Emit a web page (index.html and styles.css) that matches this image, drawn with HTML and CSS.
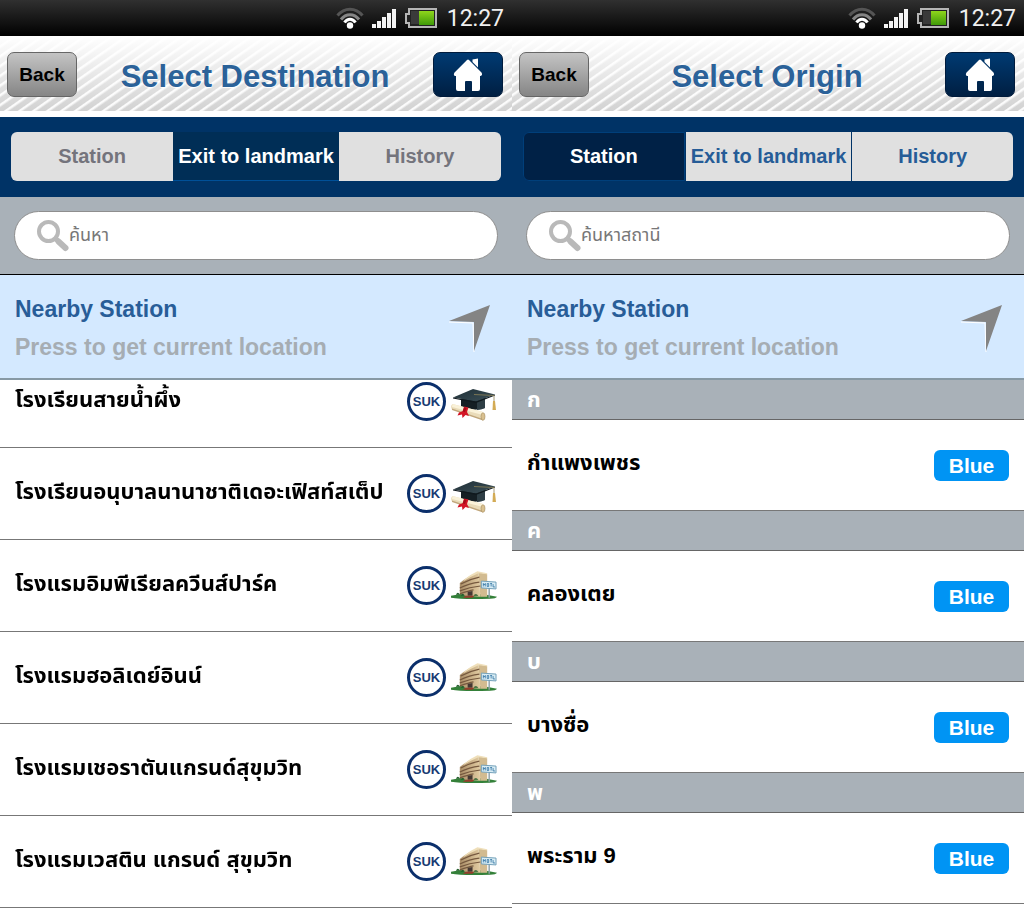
FILE: index.html
```html
<!DOCTYPE html>
<html lang="th">

<head>
    <meta charset="UTF-8">
    <meta name="viewport" content="width=device-width, initial-scale=1.0">
    <title>Select Station</title>
    <link rel="stylesheet" href="styles.css">
</head>

<body>
    <!-- shared icons -->
    <svg class="sprite" aria-hidden="true">
        <defs>
            <linearGradient id="green" x1="0" y1="0" x2="0" y2="1">
                <stop offset="0" stop-color="#8fd61c" />
                <stop offset="1" stop-color="#3f9a08" />
            </linearGradient>
            <linearGradient id="wall" x1="0" y1="0" x2="1" y2="0">
                <stop offset="0" stop-color="#a98c66" />
                <stop offset="1" stop-color="#e3cda3" />
            </linearGradient>
            <linearGradient id="board" x1="0" y1="0" x2="1" y2="1">
                <stop offset="0" stop-color="#1f2f36" />
                <stop offset="1" stop-color="#3c5058" />
            </linearGradient>
        </defs>
        <symbol id="wifi" viewBox="0 0 28 24">
            <g fill="none" stroke-width="3">
                <path d="M1.500 9.500C8.500 1 19.500 1 26.500 9.500" stroke="#555" />
                <path d="M5 13.500C10 7 18 7 23 13.500" stroke="#858585" />
                <path d="M8.500 16.500C11.500 12 16.500 12 19.500 16.500" stroke="#fff" />
            </g>
            <circle cx="14" cy="19.500" r="3.200" fill="#fff" />
        </symbol>
        <symbol id="signal" viewBox="0 0 25 20">
            <path d="M0 16h4v4H0zM5 13h4v7H5zM10 9h4v11h-4zM15 5h4v15h-4zM20 1h4v19h-4z" fill="#f4f4f4" />
        </symbol>
        <symbol id="battery" viewBox="0 0 32 20">
            <path d="M4 1h27v18H4v-4H1V6h3z" fill="#222" stroke="#b5b5b5" stroke-width="2" />
            <path d="M6 3h8v13H6z" fill="#3a3a3a" />
            <path d="M14 3h15v14H14z" fill="url(#green)" />
        </symbol>
        <symbol id="home" viewBox="0 0 30 34">
            <path d="M14 2Q15 1 16 2L28.500 14.500Q30 17 27.500 18H27V31Q27 33 25 33H19V24Q19 23 18 23H13Q12 23 12 24V33H5Q3 33 3 31V18H2Q0 17 1.500 14.500Z" fill="#fff" />
            <path d="M19.500 1.500L25 .5V9.500L19.500 4Z" fill="#fff" />
        </symbol>
        <symbol id="search" viewBox="0 0 32 32">
            <circle cx="11.500" cy="11.500" r="9.500" fill="none" stroke="#b9b9b9" stroke-width="4" />
            <path d="M18.500 18.500L20.500 20.500" stroke="#b9b9b9" stroke-width="5" />
            <path d="M21.500 21.500L28.500 28" stroke="#b9b9b9" stroke-width="6" stroke-linecap="round" />
        </symbol>
        <symbol id="arrow" viewBox="0 0 44 50">
            <path d="M1 19L25 20L26 49" fill="none" stroke="#fff" stroke-width="1" />
            <path d="M42 2L1 18L26 19L26 48Z" fill="#848484" />
        </symbol>
        <symbol id="cap" viewBox="0 -6 46 38">
            <path d="M10 10V18Q21 23 34 19V9Z" fill="#151f24" />
            <path d="M26 12L34 9V19Q30 21 26 21Z" fill="#2e3e45" />
            <path d="M2 8.500L22 0L44 5.500L25 12.500Z" fill="url(#board)" />
            <path d="M2 8.500L25 12.500L44 5.500V6.500L25 14L2 9.500Z" fill="#10191e" />
            <path d="M23 5.500L43 6.500V14" fill="none" stroke="#8d8155" stroke-width=".8" />
            <path d="M42 12H44L45 21H41.500Z" fill="#d3ab55" />
            <path d="M1.500 15L32 23V31L1 20.500Q-1 17 1.500 15Z" fill="#e9dbb9" />
            <path d="M1.500 15L32 23V26L1 18Z" fill="#faf2d9" />
            <path d="M1 19.500L32 30V31.500L1 21Z" fill="#c0a67c" />
            <ellipse cx="32" cy="27.500" rx="2" ry="3.800" fill="#d9c08f" stroke="#a58d60" stroke-width=".6" />
            <path d="M13 17.500L17.500 18.500L16 23L18 27L14.500 26L11.500 29L11 25.500L6.500 26.500L8 23.500L12 22Z" fill="#d31525" />
            <path d="M13 18.500L15.500 19L14 23L11.500 22.500Z" fill="#a80c19" />
        </symbol>
        <symbol id="hotel" viewBox="0 0 47 29">
            <path d="M0 25Q22 20 47 26Q46 28 40 28Q12 29 0 27Z" fill="#348039" />
            <path d="M9 12Q17 5 28 1L30 26L14 25L9 23Z" fill="url(#wall)" />
            <path d="M28 1L37 3V26L30 26Z" fill="#d2bb90" />
            <path d="M13 9Q20 3 27 0L37 2V3L28 2Q19 6 13 10Z" fill="#efdfba" />
            <g fill="none" stroke="#76593f" stroke-width="1.200">
                <path d="M10 13Q19 8 29 6" />
                <path d="M9 17Q19 12 29 11" />
                <path d="M9 20Q19 16 30 15" />
                <path d="M9 23Q18 20 23 19" />
            </g>
            <path d="M17 21L22 20V25H17Z" fill="#453833" />
            <path d="M5 24Q7 20 9 24ZM10 25Q12 21 14 25ZM23 25Q25 22 28 25Z" fill="#235e2c" />
            <path d="M15 25L24 25L22 27H12Z" fill="#963c2b" />
            <path d="M39 16V27" stroke="#8fa1a8" stroke-width="1.500" />
            <path d="M31 10L46 11V18L31 17Z" fill="#d9edf5" stroke="#719fb8" />
            <path d="M33 12V15.500M33 13.500H35M35 12V15.500M37 12.500H38.500V15.500H37ZM40 12.500H42M41 12.500V15.500M43 13V16H45" fill="none" stroke="#2c70a0" stroke-width=".8" />
        </symbol>
    </svg>

    <div class="screens">
        <section class="panel">
            <div class="status">
                <svg class="wifi"><use href="#wifi" /></svg>
                <svg class="signal"><use href="#signal" /></svg>
                <svg class="battery"><use href="#battery" /></svg>
                <span>12:27</span>
            </div>
            <header class="header">
                <button type="button" class="back">Back</button>
                <h1>Select Destination</h1>
                <a href="#" class="home" aria-label="Home"><svg><use href="#home" /></svg></a>
            </header>
            <nav class="tabs tabsGrey">
                <div class="tabGroup">
                    <button type="button">Station</button>
                    <button type="button" class="current">Exit to landmark</button>
                    <button type="button">History</button>
                </div>
            </nav>
            <div class="search">
                <label class="searchBox">
                    <svg><use href="#search" /></svg>
                    <input type="text" placeholder="ค้นหา" aria-label="ค้นหา">
                </label>
            </div>
            <button type="button" class="nearby">
                <span class="nearbyText">
                    <strong>Nearby Station</strong>
                    <span>Press to get current location</span>
                </span>
                <svg><use href="#arrow" /></svg>
            </button>
            <div class="list">
                <ul class="landmarks">
                    <li><span class="name">โรงเรียนสายน้ำผึ้ง</span><span class="code">SUK</span><svg class="cap"><use href="#cap" /></svg></li>
                    <li><span class="name">โรงเรียนอนุบาลนานาชาติเดอะเฟิสท์สเต็ป</span><span class="code">SUK</span><svg class="cap"><use href="#cap" /></svg></li>
                    <li><span class="name">โรงแรมอิมพีเรียลควีนส์ปาร์ค</span><span class="code">SUK</span><svg class="hotel"><use href="#hotel" /></svg></li>
                    <li><span class="name">โรงแรมฮอลิเดย์อินน์</span><span class="code">SUK</span><svg class="hotel"><use href="#hotel" /></svg></li>
                    <li><span class="name">โรงแรมเชอราตันแกรนด์สุขุมวิท</span><span class="code">SUK</span><svg class="hotel"><use href="#hotel" /></svg></li>
                    <li><span class="name">โรงแรมเวสติน แกรนด์ สุขุมวิท</span><span class="code">SUK</span><svg class="hotel"><use href="#hotel" /></svg></li>
                </ul>
            </div>
        </section>

        <section class="panel">
            <div class="status">
                <svg class="wifi"><use href="#wifi" /></svg>
                <svg class="signal"><use href="#signal" /></svg>
                <svg class="battery"><use href="#battery" /></svg>
                <span>12:27</span>
            </div>
            <header class="header">
                <button type="button" class="back">Back</button>
                <h1>Select Origin</h1>
                <a href="#" class="home" aria-label="Home"><svg><use href="#home" /></svg></a>
            </header>
            <nav class="tabs tabsBlue">
                <div class="tabGroup">
                    <button type="button" class="current">Station</button>
                    <button type="button">Exit to landmark</button>
                    <button type="button">History</button>
                </div>
            </nav>
            <div class="search">
                <label class="searchBox">
                    <svg><use href="#search" /></svg>
                    <input type="text" placeholder="ค้นหาสถานี" aria-label="ค้นหาสถานี">
                </label>
            </div>
            <button type="button" class="nearby">
                <span class="nearbyText">
                    <strong>Nearby Station</strong>
                    <span>Press to get current location</span>
                </span>
                <svg><use href="#arrow" /></svg>
            </button>
            <div class="list stations">
                <h2>ก</h2>
                <ul>
                    <li><span class="name">กำแพงเพชร</span><span class="line">Blue</span></li>
                </ul>
                <h2>ค</h2>
                <ul>
                    <li><span class="name">คลองเตย</span><span class="line">Blue</span></li>
                </ul>
                <h2>บ</h2>
                <ul>
                    <li><span class="name">บางซื่อ</span><span class="line">Blue</span></li>
                </ul>
                <h2>พ</h2>
                <ul>
                    <li><span class="name">พระราม 9</span><span class="line">Blue</span></li>
                </ul>
            </div>
        </section>
    </div>
</body>

</html>
```
FILE: styles.css
```css
* {
    box-sizing: border-box;
    margin: 0;
    padding: 0;
}

body {
    background-color: #fff;
    color: #000;
    font-family: "Liberation Sans", "Noto Sans Thai", "Noto Sans", sans-serif;
}

ul {
    list-style: none;
}

button {
    border: 0;
    font-family: inherit;
    font-weight: bold;
    cursor: pointer;
}

svg {
    display: block;
    flex: none;
}

.sprite {
    position: absolute;
    width: 0;
    height: 0;
}

.screens {
    display: grid;
    grid-template-columns: 1fr 1fr;
}

.panel {
    min-width: 0;
}

/* status bar */
.status {
    display: flex;
    align-items: center;
    justify-content: flex-end;
    gap: 8px;
    height: 36px;
    padding: 0 8px;
    background: linear-gradient(#303030, #000);
    color: #f0f0f0;
    font-family: Roboto, sans-serif;
    font-size: 23px;
}

.status span {
    margin-left: 2px;
}

.wifi {
    width: 28px;
    height: 24px;
}

.signal {
    width: 25px;
    height: 20px;
}

.battery {
    width: 32px;
    height: 20px;
}

/* title bar */
.header {
    display: flex;
    align-items: center;
    justify-content: space-between;
    height: 81px;
    padding: 2px 9px 0 7px;
    border-bottom: 6px solid #fff;
    background:
        linear-gradient(#fff, rgba(255, 255, 255, 0)),
        repeating-linear-gradient(145deg, #fbfbfb 0, #fbfbfb 1px, #d2d2d2 3px, #d2d2d2 7px, #fbfbfb 8px);
}

.header h1 {
    padding-top: 4px;
    color: #2b6299;
    font-size: 31px;
    line-height: 40px;
    text-shadow: 0 1px 1px #fff;
}

.back,
.home {
    width: 70px;
    height: 45px;
    border-radius: 7px;
}

.back {
    border: 1px solid #666;
    background: linear-gradient(#c4c4c4, #858585);
    font-size: 19px;
}

.home {
    display: flex;
    align-items: center;
    justify-content: center;
    border: 1px solid #001b3c;
    background: linear-gradient(#003a72, #001f42);
}

.home svg {
    width: 30px;
    height: 34px;
}

/* tabs */
.tabs {
    padding: 15px 11px 16px;
    background-color: #003366;
}

.tabGroup {
    display: grid;
    grid-template-columns: 1fr auto 1fr;
    overflow: hidden;
    border-radius: 6px;
}

.tabs button {
    height: 49px;
    padding: 0 5px;
    background-color: #e0e0e0;
    font-size: 20px;
}

.tabsGrey button {
    color: #74747c;
}

.tabsBlue button {
    color: #265c97;
}

.tabsBlue button + button {
    border-left: 1px solid #003366;
}

.tabs .current {
    color: #fff;
    border-bottom: 1px solid #005098;
}

.tabsGrey .current {
    background-color: #002e56;
}

.tabsBlue .current {
    background-color: #002146;
    border: 1px solid #003f7a;
    border-radius: 6px 0 0 6px;
}

/* search */
.search {
    padding: 14px;
    background-color: #a9b1b8;
    border-bottom: 1px solid #000;
}

.searchBox {
    display: flex;
    align-items: center;
    height: 49px;
    padding: 0 22px;
    border: 1px solid #8e8e8e;
    border-radius: 25px;
    background-color: #fff;
}

.searchBox svg {
    width: 32px;
    height: 32px;
}

.searchBox input {
    flex: 1;
    min-width: 0;
    height: 40px;
    border: 0;
    outline: 0;
    background: none;
    font-family: inherit;
    font-size: 18px;
}

.searchBox input::placeholder {
    color: #777;
}

/* nearby station */
.nearby {
    display: flex;
    align-items: center;
    justify-content: space-between;
    width: 100%;
    height: 105px;
    padding: 2px 20px 0 15px;
    border-bottom: 2px solid #8799a5;
    background-color: #d4e9ff;
    text-align: left;
}

.nearbyText {
    display: grid;
    gap: 8px;
    color: #a6adb3;
    font-size: 23px;
    line-height: 30px;
}

.nearbyText strong {
    color: #285d98;
}

.nearby svg {
    width: 44px;
    height: 50px;
}

/* lists */
.list {
    overflow: hidden;
}

.list li {
    display: flex;
    align-items: center;
    height: 92px;
    padding: 0 15px;
    border-bottom: 1px solid #777;
}

/* list is scrolled a little, the first row sits under the nearby bar */
.landmarks {
    margin-top: -24px;
}

.name {
    flex: 1;
    min-width: 0;
    padding-bottom: 4px;
    overflow: hidden;
    font-size: 22px;
    font-weight: bold;
    line-height: 40px;
    white-space: nowrap;
}

.landmarks .name {
    margin-right: 11px;
    mask-image: linear-gradient(to left, transparent, #000 10px);
}

.code {
    width: 39px;
    height: 39px;
    margin-right: 5px;
    border: 3px solid #0b2f6b;
    border-radius: 50%;
    color: #173a72;
    font-size: 13px;
    font-weight: bold;
    line-height: 33px;
    text-align: center;
}

.cap {
    width: 46px;
    height: 38px;
}

.hotel {
    width: 46px;
    height: 29px;
}

.stations h2 {
    height: 40px;
    padding: 0 15px;
    border-bottom: 1px solid #666;
    background-color: #a9b1b8;
    color: #fff;
    font-size: 22px;
    line-height: 39px;
}

.stations li {
    height: 91px;
}

.line {
    width: 75px;
    border-radius: 6px;
    background-color: #0094f4;
    color: #fff;
    font-size: 21px;
    font-weight: bold;
    line-height: 31px;
    text-align: center;
}
```
